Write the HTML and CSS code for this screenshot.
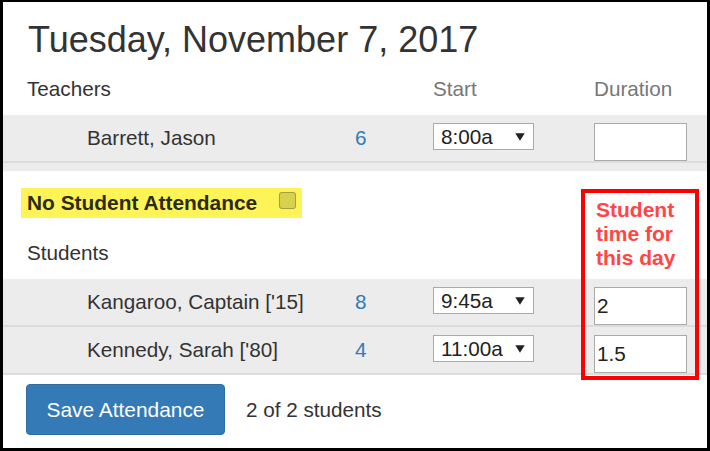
FILE: index.html
```html
<!DOCTYPE html>
<html>
<head>
<meta charset="utf-8">
<link rel="stylesheet" href="styles.css">
</head>
<body>
<div class="frame">
  <h1 class="title">Tuesday, November 7, 2017</h1>

  <div class="grid head">
    <div class="h-label">Teachers</div>
    <div></div>
    <div class="h-col">Start</div>
    <div class="h-col">Duration</div>
  </div>
  <div class="rows">
    <div class="grid row">
      <div class="name">Barrett, Jason</div>
      <div class="num">6</div>
      <div class="sel-cell"><div class="select"><span>8:00a</span><svg class="arrow" width="10" height="8" viewBox="0 0 10 8"><polygon points="0.3,0.3 9.7,0.3 5,7.8" fill="#222"/></svg></div></div>
      <div class="in-cell"><div class="input"></div></div>
    </div>
  </div>
  <div class="gray-spacer"></div>

  <div class="no-att">
    <div class="hl">No Student Attendance<span class="cb"></span></div>
  </div>

  <div class="grid head students-head">
    <div class="h-label">Students</div>
  </div>
  <div class="rows">
    <div class="grid row">
      <div class="name">Kangaroo, Captain ['15]</div>
      <div class="num">8</div>
      <div class="sel-cell"><div class="select"><span>9:45a</span><svg class="arrow" width="10" height="8" viewBox="0 0 10 8"><polygon points="0.3,0.3 9.7,0.3 5,7.8" fill="#222"/></svg></div></div>
      <div class="in-cell"><div class="input">2</div></div>
    </div>
    <div class="grid row">
      <div class="name">Kennedy, Sarah ['80]</div>
      <div class="num">4</div>
      <div class="sel-cell"><div class="select"><span>11:00a</span><svg class="arrow" width="10" height="8" viewBox="0 0 10 8"><polygon points="0.3,0.3 9.7,0.3 5,7.8" fill="#222"/></svg></div></div>
      <div class="in-cell"><div class="input">1.5</div></div>
    </div>
  </div>

  <div class="footer">
    <button class="btn">Save Attendance</button>
    <span class="count">2 of 2 students</span>
  </div>

  <div class="annot">Student<br>time for<br>this day</div>
</div>
</body>
</html>
```

FILE: styles.css
```css
* { box-sizing: border-box; }
html, body { margin: 0; padding: 0; background: #fff; }
body {
  font-family: "Liberation Sans", Arial, sans-serif;
  color: #333;
  font-size: 20.7px;
}
.frame {
  position: relative;
  width: 710px;
  height: 451px;
  border-style: solid;
  border-color: #000;
  border-width: 2px 3px 3px 3px;
  background: #fff;
  overflow: hidden;
}
.title {
  margin: 0;
  padding: 18px 0 0 25px;
  font-size: 36px;
  font-weight: normal;
  line-height: 39px;
  color: #333;
}
.grid {
  display: grid;
  grid-template-columns: 352px 78px 161px 1fr;
}
.head {
  margin-top: 18px;
  margin-bottom: 14px;
  line-height: 24px;
  height: 24px;
}
.students-head { margin-top: 23px; }
.h-label { padding-left: 24px; color: #333; }
.h-col { color: #777; }
.row {
  height: 48px;
  background: #ececec;
  border-bottom: 2px solid #dcdcdc;
  line-height: 24px;
}
.name { padding-left: 84px; align-self: center; }
.num { color: #337ab7; align-self: center; }
.sel-cell { padding-top: 8px; }
.select {
  width: 101px;
  height: 27px;
  background: #fff;
  border: 1px solid #aaa;
  display: flex;
  align-items: center;
  justify-content: space-between;
  padding: 0 8px 0 7px;
  line-height: 24px;
  color: #222;
}
.arrow { display: block; }
.in-cell { padding-top: 8px; }
.input {
  width: 93px;
  height: 38px;
  background: #fff;
  border: 1px solid #aaa;
  padding-left: 2px;
  line-height: 36px;
  color: #222;
}
.gray-spacer { height: 8px; background: #ececec; }
.no-att { padding: 17px 0 0 18px; }
.hl {
  display: inline-flex;
  align-items: center;
  width: 281px;
  height: 30px;
  background: #fff457;
  padding-left: 6px;
  font-weight: bold;
  font-size: 20.9px;
  color: #2b2b18;
}
.cb {
  width: 17px;
  height: 17px;
  margin-left: 22px;
  margin-top: -6px;
  border: 1px solid #a6a13a;
  border-radius: 3px;
  background: #d6d14e;
  box-shadow: 0 0 1px #c9c440;
}
.footer {
  display: flex;
  align-items: center;
  padding: 9px 0 0 23px;
  gap: 21px;
}
.btn {
  width: 199px;
  height: 51px;
  background: #337ab7;
  border: 1px solid #2e6da4;
  border-radius: 4px;
  color: #fff;
  font-family: "Liberation Sans", Arial, sans-serif;
  font-size: 20.9px;
  padding: 0;
}
.count { font-size: 20.7px; color: #333; }
.annot {
  position: absolute;
  left: 578px;
  top: 187px;
  width: 118px;
  height: 191px;
  border: 4px solid #ff0000;
  padding: 5px 0 0 11px;
  font-weight: bold;
  font-size: 21px;
  line-height: 24px;
  color: #ff4545;
}
```
